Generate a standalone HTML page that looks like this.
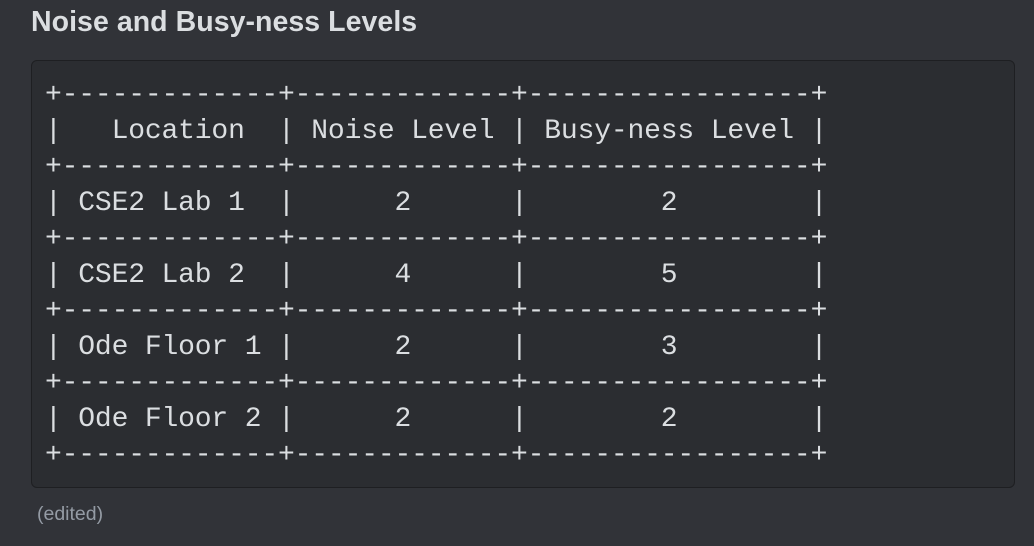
<!DOCTYPE html>
<html><head><style>
html,body{margin:0;padding:0;background:#313338;width:1034px;height:546px;overflow:hidden}
h1{position:absolute;left:31px;top:6px;margin:0;font:bold 28.5px "Liberation Sans",sans-serif;color:#dbdee1;letter-spacing:0.05px}
.box{position:absolute;left:31px;top:60px;width:984px;height:428px;background:#2b2d31;border:1px solid #1e1f22;border-radius:6px;box-sizing:border-box}
pre{position:absolute;left:45px;top:78px;margin:0;font:28px/36px "Liberation Mono",monospace;letter-spacing:-0.16px;color:#dbdee1}
.ed{position:absolute;left:37px;top:503px;font:19.5px "Liberation Sans",sans-serif;color:#949ba4}
</style></head><body>
<h1>Noise and Busy-ness Levels</h1>
<div class="box"></div>
<pre>+-------------+-------------+-----------------+
|   Location  | Noise Level | Busy-ness Level |
+-------------+-------------+-----------------+
| CSE2 Lab 1  |      2      |        2        |
+-------------+-------------+-----------------+
| CSE2 Lab 2  |      4      |        5        |
+-------------+-------------+-----------------+
| Ode Floor 1 |      2      |        3        |
+-------------+-------------+-----------------+
| Ode Floor 2 |      2      |        2        |
+-------------+-------------+-----------------+</pre>
<div class="ed">(edited)</div>
</body></html>
